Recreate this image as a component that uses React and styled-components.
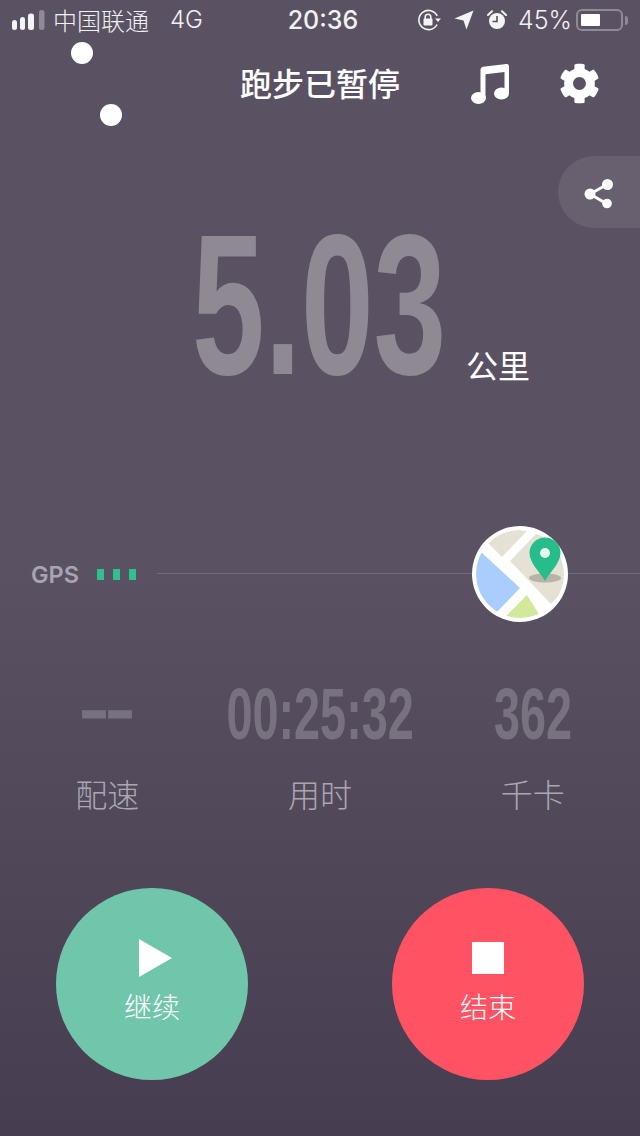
import React from "react";
import styled, { createGlobalStyle } from "styled-components";
import { FaCog } from "react-icons/fa";

const CJK = `"Noto Sans CJK SC", "Liberation Sans", sans-serif`;
const DIGITS = `"Liberation Sans", Arial, sans-serif`;

const GlobalStyle = createGlobalStyle`
  html, body {
    margin: 0;
    padding: 0;
    background: #4f4758;
  }
  * {
    box-sizing: border-box;
  }
`;

const SignalIcon = () => (
  <svg width="33" height="20" viewBox="0 0 33 20">
    <rect x="0" y="10" width="5" height="10" rx="2.5" fill="#f4f3f5" />
    <rect x="8" y="7" width="5" height="13" rx="2.5" fill="#f4f3f5" />
    <rect x="16" y="3.5" width="6" height="16.5" rx="2.5" fill="#f4f3f5" />
    <rect x="27" y="0" width="5.5" height="20" rx="2.5" fill="#8f8a96" />
  </svg>
);

const RotationLockIcon = () => (
  <svg width="24" height="22" viewBox="0 0 24 22">
    <path d="M20 15.5A9.6 9.6 0 1 1 20.2 7" fill="none" stroke="#f4f3f5" strokeWidth="1.6" />
    <path d="M18 9.5h6l-3 3.4z" fill="#f4f3f5" />
    <rect x="6.5" y="9.5" width="9" height="7" rx="1" fill="#f4f3f5" />
    <path d="M8.2 10V8a2.8 2.8 0 0 1 5.6 0v2" fill="none" stroke="#f4f3f5" strokeWidth="1.6" />
  </svg>
);

const LocationIcon = () => (
  <svg width="20" height="20" viewBox="0 0 20 20">
    <path d="M19.5 0.5L12.5 19.5L9.5 10.5L0.5 8.5z" fill="#f4f3f5" />
  </svg>
);

const AlarmIcon = () => (
  <svg width="20" height="20" viewBox="0 0 20 20">
    <circle cx="10" cy="11" r="8" fill="#f4f3f5" />
    <path d="M10 6v5.5H5.5" fill="none" stroke="#5a5262" strokeWidth="1.6" />
    <path d="M1 5L5 1.2M19 5L15 1.2" stroke="#f4f3f5" strokeWidth="2" strokeLinecap="round" />
  </svg>
);

const MusicIcon = () => (
  <svg width="38" height="40" viewBox="0 0 38 40">
    <ellipse cx="7.5" cy="34" rx="7.5" ry="6" fill="#fff" />
    <ellipse cx="30.5" cy="29.5" rx="7.5" ry="6" fill="#fff" />
    <path d="M9.5 34V5.5Q9.5 3.2 12 2.8L35.5 0Q38 -0.2 38 2.3V29.5H33.5V8L14.5 10.2V34z" fill="#fff" />
  </svg>
);

const ShareIcon = () => (
  <svg width="32" height="32" viewBox="0 0 32 32">
    <path d="M7 16L25 6M7 16L24 26" stroke="#fff" strokeWidth="3" />
    <circle cx="7" cy="16" r="5.5" fill="#fff" />
    <circle cx="24.5" cy="6.5" r="5.5" fill="#fff" />
    <circle cx="24" cy="25.5" r="4.8" fill="#fff" />
  </svg>
);

const MapIcon = () => (
  <svg width="96" height="96" viewBox="0 0 96 96">
    <defs>
      <clipPath id="mapClip">
        <circle cx="48" cy="48" r="44" />
      </clipPath>
    </defs>
    <circle cx="48" cy="48" r="48" fill="#fff" />
    <g clipPath="url(#mapClip)">
      <path d="M16 17L30 31L55 5L20 0z" fill="#e5e1d4" />
      <path d="M38 35L64 8L96 20L96 60L79 78z" fill="#e5e1d4" />
      <path d="M9 26L48 62L25 86L0 70L0 26z" fill="#a9cdfc" />
      <path d="M55 69L34 90L50 96L68 90z" fill="#d2e89a" />
    </g>
    <ellipse cx="73" cy="52" rx="16" ry="4.5" fill="#9a958a" opacity="0.6" />
    <path d="M73 55C68 46 57.5 37 57.5 27A15.5 15.5 0 0 1 88.5 27C88.5 37 78 46 73 55z" fill="#27bd8a" />
    <circle cx="73" cy="27" r="5" fill="#e6f8f2" />
  </svg>
);

const App = () => {
  const stats = [
    { value: "––", label: "配速", dash: true },
    { value: "00:25:32", label: "用时" },
    { value: "362", label: "千卡" },
  ];

  return (
    <Page>
      <GlobalStyle />
      <StatusBar>
        <StatusLeft>
          <SignalIcon />
          <Carrier>中国联通</Carrier>
          <Network>4G</Network>
        </StatusLeft>
        <Clock>20:36</Clock>
        <StatusRight>
          <RotationLockIcon />
          <LocationIcon />
          <AlarmIcon />
          <Percent>45%</Percent>
          <Battery>
            <BatteryFill />
          </Battery>
          <BatteryCap />
        </StatusRight>
      </StatusBar>

      <Dot $left={71} $top={42} />
      <Dot $left={100} $top={104} />

      <Header>
        <Title>跑步已暂停</Title>
        <HeaderActions>
          <MusicIcon />
          <GearIcon />
        </HeaderActions>
      </Header>

      <ShareTab>
        <ShareIcon />
      </ShareTab>

      <Distance>
        <DistanceBox>
          <DistanceValue>5.03</DistanceValue>
        </DistanceBox>
        <DistanceUnit>公里</DistanceUnit>
      </Distance>

      <GpsRow>
        <GpsLabel>GPS</GpsLabel>
        <GpsBars>
          <GpsBar />
          <GpsBar />
          <GpsBar />
        </GpsBars>
        <GpsLine />
        <MapBadge>
          <MapIcon />
        </MapBadge>
      </GpsRow>

      <Stats>
        {stats.map((s) => (
          <Stat key={s.label}>
            <StatBox>
              <StatValue $dash={s.dash}>{s.value}</StatValue>
            </StatBox>
            <StatLabel>{s.label}</StatLabel>
          </Stat>
        ))}
      </Stats>

      <Actions>
        <RoundButton $bg="#70c6aa">
          <IconSlot>
            <PlayShape />
          </IconSlot>
          <ButtonLabel>继续</ButtonLabel>
        </RoundButton>
        <RoundButton $bg="#ff5364">
          <IconSlot>
            <StopShape />
          </IconSlot>
          <ButtonLabel>结束</ButtonLabel>
        </RoundButton>
      </Actions>
    </Page>
  );
};

export default App;

const Page = styled.div`
  position: relative;
  width: 640px;
  height: 1136px;
  overflow: hidden;
  display: flex;
  flex-direction: column;
  background: linear-gradient(180deg, #5a5262 0%, #5a5262 50%, #463d50 100%);
  font-family: ${CJK};
  color: #fff;
`;

const StatusBar = styled.div`
  position: relative;
  height: 40px;
  display: flex;
  align-items: center;
  justify-content: space-between;
  padding: 0 12px;
  font-size: 24px;
  font-weight: 300;
  color: #f1f0f2;
`;

const StatusLeft = styled.div`
  display: flex;
  align-items: center;
`;

const Carrier = styled.span`
  margin-left: 8px;
  line-height: 1;
`;

const Network = styled.span`
  margin-left: 21px;
  font-family: Inter, "Liberation Sans", sans-serif;
  font-size: 24px;
  line-height: 1;
`;

const Clock = styled.span`
  position: absolute;
  left: 6px;
  right: 0;
  text-align: center;
  font-family: Inter, "Liberation Sans", sans-serif;
  font-size: 25px;
  font-weight: 500;
`;

const StatusRight = styled.div`
  display: flex;
  align-items: center;
  gap: 13px;
  margin-left: auto;
`;

const Percent = styled.span`
  font-family: Inter, "Liberation Sans", sans-serif;
  font-size: 25px;
  font-weight: 300;
  margin-left: -2px;
`;

const Battery = styled.div`
  width: 47px;
  height: 22px;
  margin-left: -9px;
  padding: 3px;
  border: 2px solid #8f8a96;
  border-radius: 6px;
`;

const BatteryFill = styled.div`
  width: 19px;
  height: 100%;
  background: #fff;
  border-radius: 1px;
`;

const BatteryCap = styled.div`
  width: 3px;
  height: 9px;
  margin-left: -11px;
  background: #8f8a96;
  border-radius: 0 3px 3px 0;
`;

const Dot = styled.div`
  position: absolute;
  left: ${(p) => p.$left}px;
  top: ${(p) => p.$top}px;
  width: 22px;
  height: 22px;
  border-radius: 50%;
  background: #fff;
`;

const Header = styled.div`
  position: relative;
  height: 88px;
  display: flex;
  align-items: center;
  justify-content: center;
`;

const Title = styled.h1`
  margin: -4px 0 0;
  font-size: 32px;
  font-weight: 500;
  line-height: 1;
`;

const HeaderActions = styled.div`
  position: absolute;
  right: 40px;
  top: 23px;
  display: flex;
  align-items: center;
  gap: 50px;
`;

const GearIcon = styled(FaCog)`
  width: 41px;
  height: 41px;
  color: #fff;
`;

const ShareTab = styled.div`
  align-self: flex-end;
  width: 82px;
  height: 72px;
  margin-top: 28px;
  padding: 4px 0 0 25px;
  display: flex;
  align-items: center;
  background: #685f6f;
  border-radius: 36px 0 0 36px;
`;

const Distance = styled.div`
  height: 162px;
  display: flex;
  align-items: flex-end;
  padding-left: 192px;
`;

const DistanceBox = styled.div`
  width: 252px;
  height: 162px;
`;

const DistanceValue = styled.div`
  display: inline-block;
  font-family: ${DIGITS};
  font-size: 201px;
  font-weight: 700;
  line-height: 153px;
  color: #8f8994;
  transform: scaleX(0.65);
  transform-origin: left center;
  white-space: nowrap;
`;

const DistanceUnit = styled.span`
  margin-left: 22px;
  margin-bottom: 7px;
  font-size: 32px;
  font-weight: 400;
  line-height: 1.2;
`;

const GpsRow = styled.div`
  position: relative;
  height: 96px;
  margin-top: 136px;
  display: flex;
  align-items: center;
  padding-left: 31px;
`;

const GpsLabel = styled.span`
  font-family: Inter, "Liberation Sans", sans-serif;
  font-size: 23.5px;
  font-weight: 600;
  color: #a9a4b0;
`;

const GpsBars = styled.div`
  display: flex;
  gap: 9px;
  margin-left: 18px;
`;

const GpsBar = styled.div`
  width: 7px;
  height: 11px;
  background: #2fc18c;
`;

const GpsLine = styled.div`
  flex: 1;
  height: 1px;
  margin-left: 21px;
  margin-top: -2px;
  background: #746c7c;
`;

const MapBadge = styled.div`
  position: absolute;
  left: 472px;
  top: 0;
  width: 96px;
  height: 96px;
`;

const Stats = styled.div`
  margin-top: 62px;
  display: flex;
  padding: 0 1px;
`;

const Stat = styled.div`
  flex: 1;
  display: flex;
  flex-direction: column;
  align-items: center;
`;

const StatBox = styled.div`
  width: 186px;
  height: 60px;
  display: flex;
  justify-content: center;
`;

const StatValue = styled.div`
  font-family: ${DIGITS};
  font-size: 72px;
  font-weight: 700;
  line-height: ${(p) => (p.$dash ? "50px" : "60px")};
  color: #78717f;
  transform: scaleX(0.65);
  white-space: nowrap;
  -webkit-text-stroke: ${(p) => (p.$dash ? "1px #78717f" : "0")};
`;

const StatLabel = styled.span`
  margin-top: 26px;
  font-size: 32px;
  font-weight: 300;
  line-height: 46px;
  color: #aba6b2;
`;

const Actions = styled.div`
  margin-top: 72px;
  display: flex;
  justify-content: space-between;
  padding: 0 56px;
`;

const RoundButton = styled.button`
  width: 192px;
  height: 192px;
  padding: 51px 0 0;
  border: 0;
  border-radius: 50%;
  display: flex;
  flex-direction: column;
  align-items: center;
  background: ${(p) => p.$bg};
  color: #fff;
  font-family: ${CJK};
`;

const IconSlot = styled.div`
  height: 38px;
  display: flex;
  align-items: center;
  justify-content: center;
`;

const PlayShape = styled.div`
  width: 0;
  height: 0;
  margin-left: 6px;
  border-left: 33px solid #fff;
  border-top: 19px solid transparent;
  border-bottom: 19px solid transparent;
`;

const StopShape = styled.div`
  width: 32px;
  height: 32px;
  background: #fff;
`;

const ButtonLabel = styled.span`
  margin-top: 11px;
  font-size: 28px;
  font-weight: 300;
  line-height: 36px;
`;
